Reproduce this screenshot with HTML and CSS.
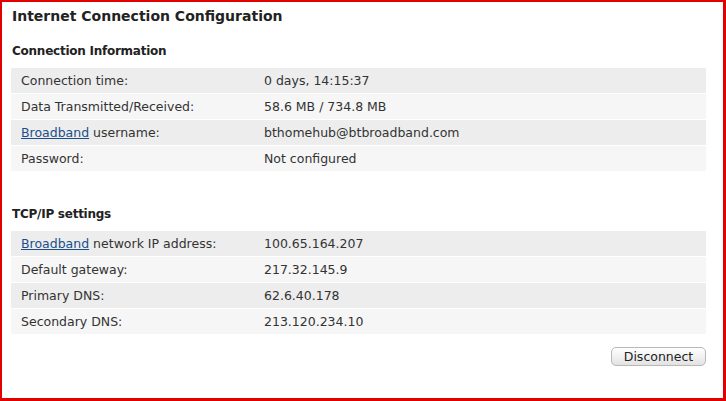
FILE: index.html
```html
<!DOCTYPE html>
<html lang="en">
<head>
    <meta charset="UTF-8">
    <title>Internet Connection Configuration</title>
    <link rel="stylesheet" href="styles.css">
</head>
<body>
  <div class="frame">
      <h1 class="titulo">Internet Connection Configuration</h1>

      <h2 class="secao">Connection Information</h2>
      <table class="info">
          <tr><td class="rotulo">Connection time:</td><td>0 days, 14:15:37</td></tr>
          <tr><td class="rotulo">Data Transmitted/Received:</td><td>58.6 MB / 734.8 MB</td></tr>
          <tr><td class="rotulo"><a href="#">Broadband</a> username:</td><td>bthomehub@btbroadband.com</td></tr>
          <tr><td class="rotulo">Password:</td><td>Not configured</td></tr>
      </table>

      <h2 class="secao secao-tcp">TCP/IP settings</h2>
      <table class="info">
          <tr><td class="rotulo"><a href="#">Broadband</a> network IP address:</td><td>100.65.164.207</td></tr>
          <tr><td class="rotulo">Default gateway:</td><td>217.32.145.9</td></tr>
          <tr><td class="rotulo">Primary DNS:</td><td>62.6.40.178</td></tr>
          <tr><td class="rotulo">Secondary DNS:</td><td>213.120.234.10</td></tr>
      </table>

      <div class="acoes">
          <button class="botao">Disconnect</button>
      </div>
  </div>
</body>
</html>
```

FILE: styles.css
```css
html, body { margin: 0; padding: 0; background-color: #fff; }
body { font-family: "DejaVu Sans", Verdana, sans-serif; color: #333; }
.frame { box-sizing: border-box; width: 726px; height: 401px; border: solid #e00000; border-width: 2px 3px 3px 2px; padding: 4px 17px 0 9px; }
.titulo { font-size: 14px; line-height: 20px; font-weight: bold; color: #222; margin: 0 0 16px 1px; }
.secao { font-size: 12px; line-height: 18px; font-weight: bold; color: #222; letter-spacing: -0.25px; margin: 0 0 8px 1px; }
.secao-tcp { margin-top: 33px; }
.info { width: 100%; border-collapse: collapse; font-size: 12.5px; }
.info td { height: 25px; padding: 0 0 0 10px; border-bottom: 1px solid #fff; }
.info tr:nth-child(odd) td { background-color: #ededed; }
.info tr:nth-child(even) td { background-color: #f6f6f6; }
.info .rotulo { width: 233px; }
.info a { color: #1b4f8a; text-decoration: underline; }
.acoes { display: flex; justify-content: flex-end; margin-top: 12px; }
.botao { font-family: "DejaVu Sans", Verdana, sans-serif; font-size: 12.5px; color: #222; height: 19px; width: 95px; padding: 0; border: 1px solid #b8b8b8; border-radius: 5px; background: linear-gradient(#fefefe, #f1f1f1 50%, #e2e2e2); }
```
